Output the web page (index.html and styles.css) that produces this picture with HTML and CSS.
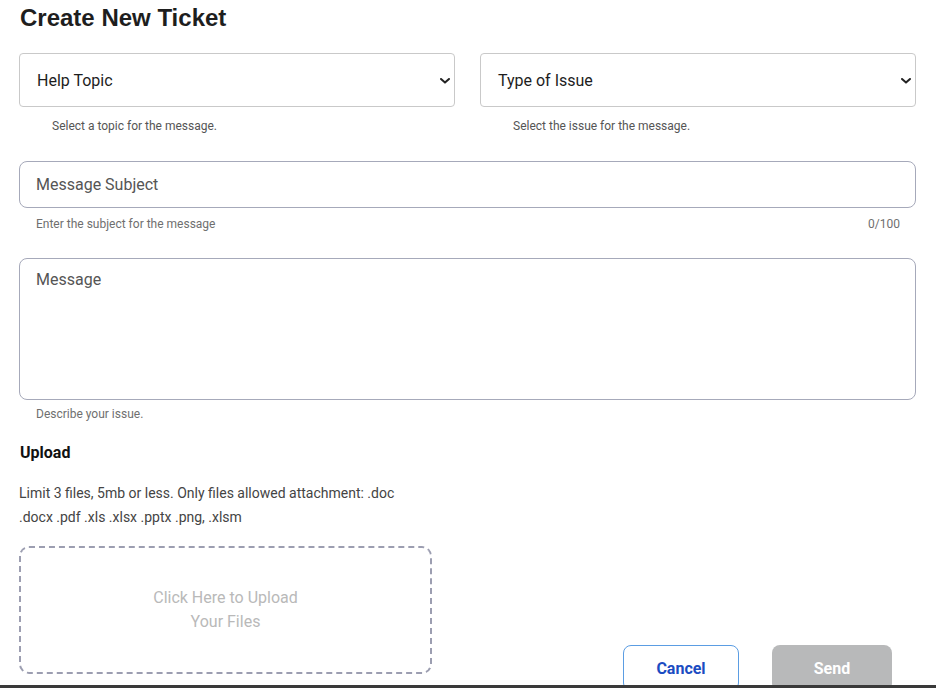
FILE: index.html
```html
<!DOCTYPE html>
<html>
<head>
<meta charset="utf-8">
<title>Create New Ticket</title>
<link rel="stylesheet" href="styles.css">
</head>
<body>
<div class="page">
  <h1 class="title">Create New Ticket</h1>

  <div class="row-two">
    <div class="field">
      <div class="select">
        <span>Help Topic</span>
        <svg class="chev" width="10" height="6" viewBox="0 0 10 6"><path d="M1 1 L5 4.6 L9 1" fill="none" stroke="#222" stroke-width="2" stroke-linecap="round" stroke-linejoin="round"/></svg>
      </div>
      <div class="help indent">Select a topic for the message.</div>
    </div>
    <div class="field">
      <div class="select">
        <span>Type of Issue</span>
        <svg class="chev" width="10" height="6" viewBox="0 0 10 6"><path d="M1 1 L5 4.6 L9 1" fill="none" stroke="#222" stroke-width="2" stroke-linecap="round" stroke-linejoin="round"/></svg>
      </div>
      <div class="help indent">Select the issue for the message.</div>
    </div>
  </div>

  <div class="input subject">Message Subject</div>
  <div class="help-row">
    <span class="help light">Enter the subject for the message</span>
    <span class="help light">0/100</span>
  </div>

  <div class="input textarea">Message</div>
  <div class="help light desc">Describe your issue.</div>

  <div class="upload-title">Upload</div>
  <p class="limit">Limit 3 files, 5mb or less. Only files allowed attachment: .doc .docx .pdf .xls .xlsx .pptx .png, .xlsm</p>

  <div class="bottom">
    <div class="dropzone">Click Here to Upload<br>Your Files</div>
    <div class="actions">
      <button class="btn cancel">Cancel</button>
      <button class="btn send">Send</button>
    </div>
  </div>
</div>
</body>
</html>
```

FILE: styles.css
```css
html, body {
  margin: 0;
  padding: 0;
  background: #ffffff;
}

body {
  font-family: Roboto, "Liberation Sans", Arial, sans-serif;
  color: #222;
}

.page {
  height: 685px;
  overflow: hidden;
  border-bottom: 3px solid #3a3a3a;
  padding: 0 20px 0 19px;
}

.title {
  margin: 4px 0 0 1px;
  font-family: "Liberation Sans", Arial, sans-serif;
  font-weight: bold;
  font-size: 24px;
  line-height: 28px;
  color: #1e1e1e;
}

.row-two {
  display: grid;
  grid-template-columns: 1fr 1fr;
  column-gap: 25px;
  margin-top: 21px;
}

.select {
  box-sizing: border-box;
  height: 54px;
  border: 1px solid #c9c9c9;
  border-radius: 4px;
  display: flex;
  align-items: center;
  justify-content: space-between;
  padding: 0 4px 0 17px;
  font-size: 16px;
  color: #1d1d1d;
}

.chev {
  display: block;
  margin-top: 1px;
}

.help {
  font-size: 12px;
  line-height: 14px;
  color: #555;
}

.indent {
  margin-top: 12px;
  padding-left: 33px;
}

.input {
  box-sizing: border-box;
  border: 1px solid #a6a9ba;
  border-radius: 8px;
  font-size: 16px;
  line-height: 20px;
  color: #555;
  padding-left: 16px;
}

.subject {
  margin-top: 28px;
  height: 47px;
  display: flex;
  align-items: center;
}

.help-row {
  display: flex;
  justify-content: space-between;
  margin-top: 9px;
  padding: 0 16px 0 17px;
}

.light {
  color: #6f6f6f;
}

.textarea {
  margin-top: 27px;
  height: 142px;
  padding-top: 11px;
}

.desc {
  margin-top: 7px;
  padding-left: 17px;
}

.upload-title {
  margin-top: 22px;
  margin-left: 1px;
  font-weight: bold;
  font-size: 16px;
  line-height: 20px;
  color: #111;
}

.limit {
  margin: 18px 0 0 0;
  width: 412px;
  font-size: 14px;
  line-height: 24px;
  color: #444;
}

.bottom {
  display: flex;
  align-items: flex-start;
  margin-top: 17px;
}

.dropzone {
  box-sizing: border-box;
  width: 413px;
  height: 128px;
  border: 2px dashed #9c9eb1;
  border-radius: 10px;
  display: flex;
  align-items: center;
  justify-content: center;
  text-align: center;
  font-size: 16px;
  line-height: 24px;
  color: #b9b9b9;
}

.actions {
  display: flex;
  gap: 33px;
  margin-top: 99px;
  margin-left: 191px;
}

.btn {
  box-sizing: border-box;
  height: 46px;
  border-radius: 8px;
  font-family: Roboto, "Liberation Sans", Arial, sans-serif;
  font-weight: bold;
  font-size: 16px;
  padding: 0;
  cursor: pointer;
}

.cancel {
  width: 116px;
  background: #fff;
  border: 1px solid #5b9de3;
  color: #1b4cc2;
}

.send {
  width: 120px;
  background: #b8b9ba;
  border: none;
  color: #fff;
}
```
